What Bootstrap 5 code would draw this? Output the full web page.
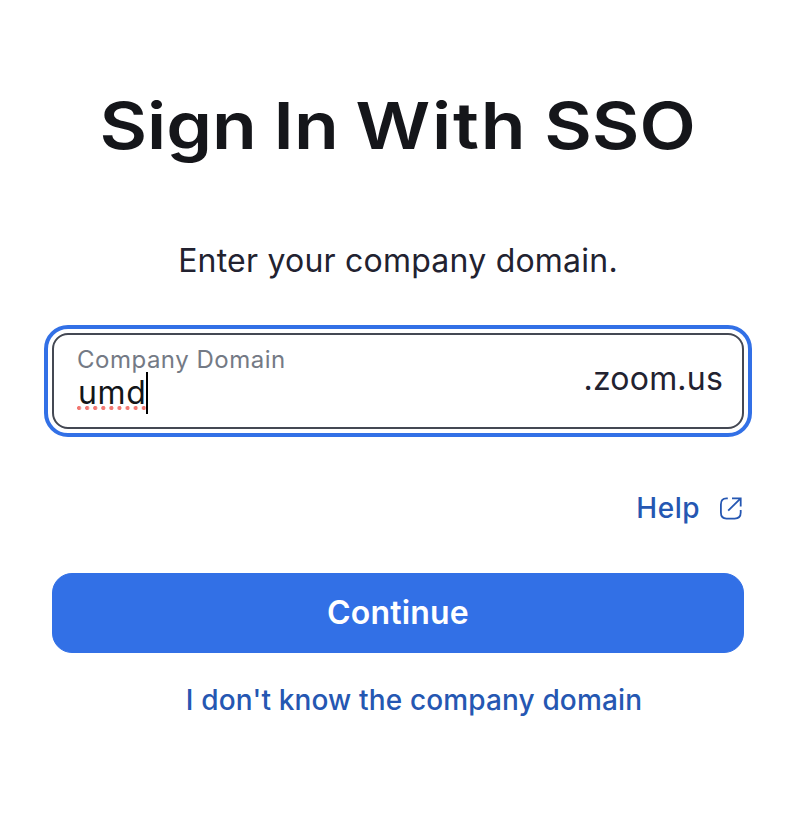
<!DOCTYPE html>
<html lang="en">
<head>
<meta charset="utf-8">
<meta name="viewport" content="width=device-width, initial-scale=1">
<title>Sign In With SSO</title>
<link href="https://cdn.jsdelivr.net/npm/bootstrap@5.3.0/dist/css/bootstrap.min.css" rel="stylesheet">
<style>
body{font-family:Inter,"Liberation Sans",sans-serif;color:#222230;background:#fff;overflow:hidden}
.sso{padding:85px 42px 0 52px}
.sso-title{font-size:65px;line-height:82px;font-weight:600;color:#15161a;white-space:nowrap}
.sso-title span{display:inline-block;transform:scaleX(1.127);word-spacing:-1.5px}
.sso-title b{font-weight:inherit;letter-spacing:1.6px}
.sso-sub{margin-top:74px;font-size:32px;line-height:40px;letter-spacing:.22px}
.domain-box{margin-top:52px;height:96px;border:2px solid #444853;border-radius:16px;outline:4px solid #3270e6;outline-offset:4px;padding:10px 19px 0 23px}
.domain-label{font-size:24px;line-height:30px;letter-spacing:.5px;color:#747a85}
.domain-value{font-size:32px;line-height:40px;color:#131619;margin-top:-3px}
.domain-value .typed{background:radial-gradient(circle at 2px 2px,#f27872 1.8px,transparent 2.3px) 0 100%/8.1px 4px repeat-x;height:38px;line-height:42px;letter-spacing:.6px;padding-left:1px}
.caret{width:2px;height:42px;background:#000}
.suffix{font-size:32px;line-height:40px;margin-top:14px;letter-spacing:.2px}
.blue-link{color:#2557b2;font-size:28px;line-height:36px;font-weight:500;text-decoration:none;letter-spacing:.5px}
.help-row{margin-top:61px;gap:19px;padding-right:1px}
.btn-continue{--bs-btn-bg:#3270e6;--bs-btn-border-color:#3270e6;--bs-btn-color:#fff;margin-top:47px;height:80px;border-radius:20px;font-size:32px;line-height:40px;font-weight:600;letter-spacing:.2px}
.unknown-row{margin-top:29px;padding-left:32px}
.unknown-row .blue-link{letter-spacing:.14px}
</style>
<script src="https://cdn.jsdelivr.net/npm/bootstrap@5.3.0/dist/js/bootstrap.bundle.min.js"></script>
</head>
<body>
<main class="sso">
  <h1 class="sso-title text-center mb-0"><span>Sign In <b>With</b> SSO</span></h1>
  <p class="sso-sub text-center mb-0">Enter your company domain.</p>
  <div class="domain-box d-flex justify-content-between align-items-start">
    <div>
      <div class="domain-label">Company Domain</div>
      <div class="domain-value d-flex"><span class="typed">umd</span><span class="caret"></span></div>
    </div>
    <span class="suffix">.zoom.us</span>
  </div>
  <div class="help-row d-flex justify-content-end align-items-center">
    <a href="#" class="blue-link">Help</a>
    <svg width="24" height="24" viewBox="0 0 24 24" fill="none" stroke="#2557b2" stroke-width="1.8"><path d="M8.8 2.4H7.5Q1.9 2.4 1.9 8.4V16.6Q1.9 22.6 7.5 22.6H15.7Q21.7 22.6 21.7 16.6V14M9.2 14.6 21.4 2.6M13 2.4H21.7V10.6"/></svg>
  </div>
  <button class="btn btn-primary btn-continue w-100 d-flex justify-content-center align-items-center">Continue</button>
  <div class="unknown-row text-center"><a href="#" class="blue-link">I don't know the company domain</a></div>
</main>
</body>
</html>
